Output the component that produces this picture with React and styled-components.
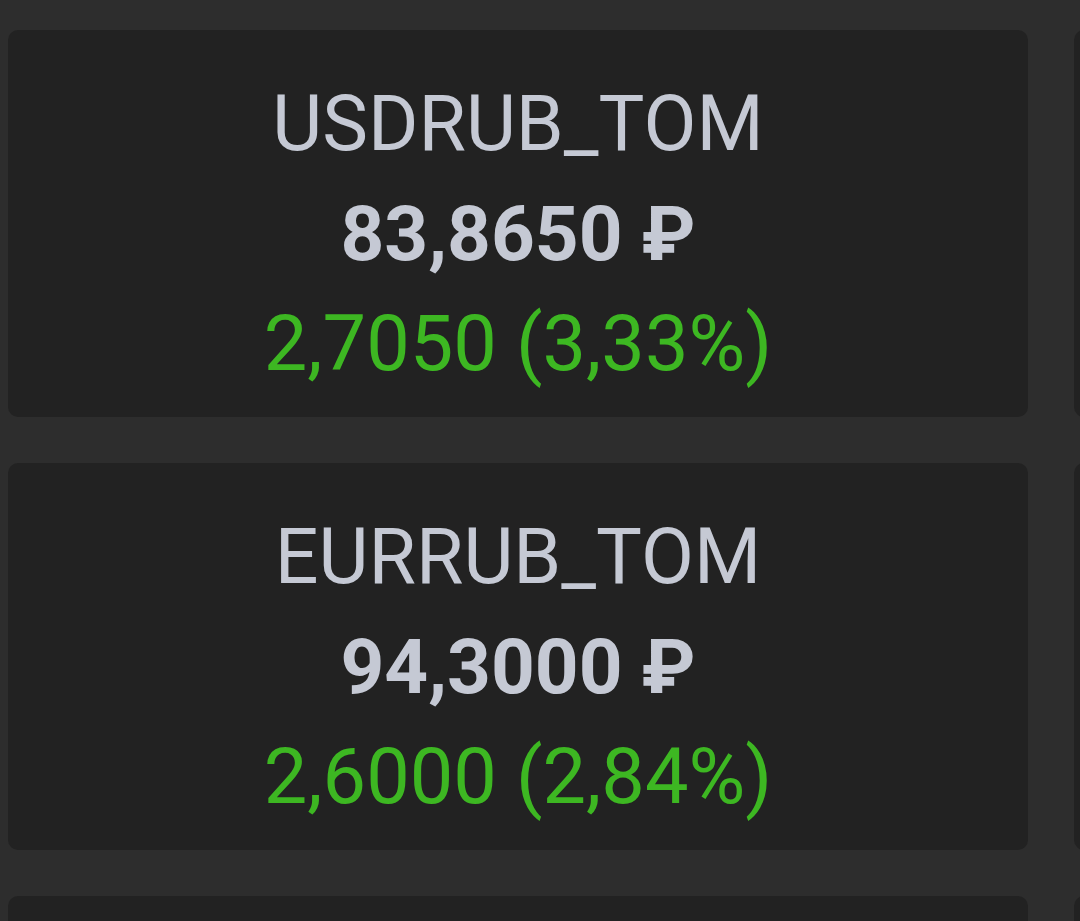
import styled, { createGlobalStyle } from "styled-components";

const GlobalStyle = createGlobalStyle`
  html, body {
    margin: 0;
    padding: 0;
    background: #2d2d2d;
    overflow: hidden;
  }
`;

const Grid = styled.div`
  display: grid;
  grid-template-columns: 1020px 1020px;
  grid-auto-rows: 387px;
  column-gap: 46px;
  row-gap: 46px;
  padding: 30px 0 0 8px;
  width: 1080px;
  height: 921px;
  overflow: hidden;
  box-sizing: border-box;
  font-family: Roboto, "Liberation Sans", sans-serif;
`;

const Card = styled.div`
  background: #222222;
  border-radius: 10px;
  box-sizing: border-box;
  padding-top: 39px;
  display: flex;
  flex-direction: column;
  align-items: center;
  text-align: center;
`;

const Ticker = styled.div`
  font-size: 77px;
  line-height: 110px;
  font-weight: 400;
  color: #c5c9d4;
`;

const Price = styled.div`
  font-size: 76.5px;
  line-height: 110px;
  font-weight: 700;
  color: #c5c9d4;
`;

const Change = styled.div`
  font-size: 77.5px;
  line-height: 110px;
  font-weight: 400;
  color: ${(p) => (p.$down ? "#e04545" : "#3db722")};
`;

const rows = [
  { ticker: "USDRUB_TOM", price: "83,8650 ₽", change: "2,7050 (3,33%)" },
  { ticker: "EURRUB_TOM", price: "94,3000 ₽", change: "2,6000 (2,84%)" },
  { ticker: null },
];

const App = () => {
  return (
    <>
      <GlobalStyle />
      <Grid>
        {rows.map((r, i) => [
          <Card key={`a${i}`}>
            {r.ticker && (
              <>
                <Ticker>{r.ticker}</Ticker>
                <Price>{r.price}</Price>
                <Change>{r.change}</Change>
              </>
            )}
          </Card>,
          <Card key={`b${i}`} />,
        ])}
      </Grid>
    </>
  );
};

export default App;
